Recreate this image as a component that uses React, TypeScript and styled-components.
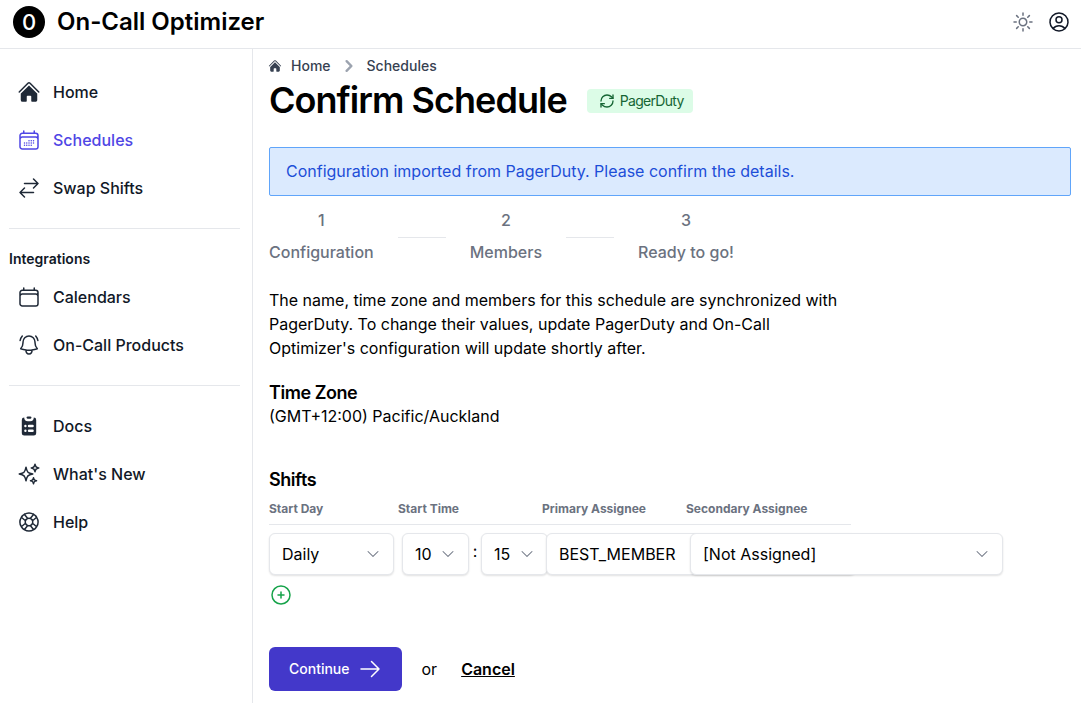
import styled, { createGlobalStyle } from "styled-components";
import { ReactNode } from "react";
import {
  HiHome,
  HiChevronDown,
  HiOutlineArrowsRightLeft,
  HiOutlineArrowRight,
  HiOutlineBellAlert,
  HiOutlineCalendar,
  HiOutlineCalendarDays,
  HiOutlineLifebuoy,
  HiOutlinePlusCircle,
  HiOutlineSparkles,
  HiOutlineSun,
  HiOutlineUserCircle,
} from "react-icons/hi2";
import { HiChevronRight, HiClipboardList } from "react-icons/hi";
import { RefreshCw } from "lucide-react";

const GlobalStyle = createGlobalStyle`
  * { box-sizing: border-box; }
  html, body { margin: 0; height: 100%; overflow: hidden; }
  body {
    background: #fff;
    color: #000;
    font-family: Inter, "Liberation Sans", sans-serif;
    font-size: 16px;
    line-height: 24px;
  }
`;

const Page = styled.div`
  display: flex;
  flex-direction: column;
  height: 100vh;
`;

const Header = styled.header`
  display: flex;
  align-items: center;
  flex: 0 0 49px;
  padding: 0 10px 4px 13px;
  border-bottom: 1px solid #e5e7eb;
`;

const Logo = styled.div`
  display: flex;
  align-items: center;
  justify-content: center;
  width: 32px;
  height: 32px;
  margin-right: 12px;
  border-radius: 50%;
  background: #000;
  color: #fff;
  font-size: 22px;
  font-weight: 500;
`;

const Brand = styled.div`
  flex: 1;
  font-size: 24px;
  font-weight: 600;
  line-height: 32px;
`;

const HeaderButton = styled.span<{ $color: string }>`
  display: flex;
  margin-left: 12px;
  color: ${(p) => p.$color};
  font-size: 24px;
`;

const Body = styled.div`
  display: flex;
  flex: 1;
  min-height: 0;
`;

const Sidebar = styled.nav`
  flex: 0 0 253px;
  padding: 19px 12px 0 9px;
  border-right: 1px solid #e5e7eb;
`;

const NavItem = styled.a<{ $active?: boolean }>`
  display: flex;
  align-items: center;
  gap: 12px;
  height: 48px;
  padding-left: 8px;
  color: ${(p) => (p.$active ? "#4f46e5" : "#111827")};
  font-size: 16px;
  font-weight: 500;
  svg {
    flex: none;
    font-size: 24px;
    color: ${(p) => (p.$active ? "#4f46e5" : "#1f2937")};
  }
`;

const NavDivider = styled.hr`
  margin: 16px 0;
  border: none;
  border-top: 1px solid #e5e7eb;
`;

const NavLabel = styled.div`
  margin-top: 20px;
  margin-bottom: 4px;
  color: #111827;
  font-size: 14px;
  font-weight: 600;
  line-height: 20px;
`;

const Main = styled.main`
  flex: 1;
  min-width: 0;
  padding: 7px 10px 0 16px;
`;

const Breadcrumb = styled.div`
  display: flex;
  align-items: center;
  height: 20px;
  color: #374151;
  font-size: 14px;
  font-weight: 500;
`;

const Crumb = styled.span`
  display: flex;
  align-items: center;
`;

const CrumbHome = styled.span`
  display: flex;
  margin-left: -1px;
  margin-right: 9px;
  color: #374151;
  font-size: 14px;
`;

const CrumbSep = styled.span`
  display: flex;
  margin: 0 6px;
  color: #9ca3af;
  font-size: 24px;
`;

const TitleRow = styled.div`
  display: flex;
  align-items: center;
  gap: 20px;
  margin-top: 4px;
  margin-bottom: 27px;
`;

const Title = styled.h1`
  margin: 0;
  font-size: 36px;
  font-weight: 600;
  line-height: 40px;
  letter-spacing: -0.96px;
`;

const Badge = styled.span`
  display: flex;
  align-items: center;
  gap: 5px;
  height: 24px;
  margin-top: 1px;
  padding: 0 9px 0 12px;
  border-radius: 4px;
  background: #dcfce7;
  color: #166534;
  font-size: 14px;
  letter-spacing: -0.7px;
`;

const Alert = styled.div`
  height: 49px;
  padding: 11px 16px;
  border: 1px solid #60a5fa;
  border-radius: 2px;
  background: #dbeafe;
  color: #1d4ed8;
  font-size: 16px;
`;

const Steps = styled.div`
  display: flex;
  align-items: center;
  gap: 24px;
  margin-top: 12px;
  margin-bottom: 24px;
  color: #6b7280;
  font-weight: 500;
`;

const Step = styled.div`
  display: flex;
  flex-direction: column;
  align-items: center;
  gap: 8px;
`;

const StepLine = styled.div`
  width: 48px;
  margin-top: 3px;
  border-top: 1px solid #e5e7eb;
`;

const Intro = styled.p`
  max-width: 576px;
  margin: 0 0 19px;
`;

const SectionTitle = styled.h2`
  margin: 0;
  font-size: 18px;
  font-weight: 600;
  line-height: 28px;
  letter-spacing: -0.45px;
`;

const Zone = styled.div`
  margin-top: -3px;
  margin-bottom: 38px;
`;

const ShiftHead = styled.div`
  display: grid;
  grid-template-columns: 129px 144px 144px 165px;
  width: 582px;
  margin-top: 6px;
  padding-bottom: 6px;
  border-bottom: 1px solid #e5e7eb;
  color: #6b7280;
  font-size: 12px;
  font-weight: 700;
  line-height: 18px;
`;

const ShiftRow = styled.div`
  display: grid;
  grid-template-columns: 129px 144px 144px 165px;
  margin-top: 8px;
`;

const TimeCell = styled.div`
  display: flex;
  align-items: flex-start;
  padding-left: 4px;
`;

const Colon = styled.span`
  flex: none;
  width: 12px;
  text-align: center;
  line-height: 36px;
`;

const AssigneeCell = styled.div`
  padding-left: 4px;
`;

const Select = styled.div<{ $width: number; $raised?: boolean }>`
  position: relative;
  z-index: ${(p) => (p.$raised ? 1 : 0)};
  display: flex;
  align-items: center;
  justify-content: space-between;
  flex: none;
  width: ${(p) => p.$width}px;
  height: 42px;
  padding: 0 12px;
  border: 1px solid #e5e7eb;
  border-radius: 6px;
  background: #fff;
  box-shadow: 0 1px 2px rgba(0, 0, 0, 0.12);
  svg {
    flex: none;
    color: #6b7280;
    font-size: 16px;
  }
`;

const AddButton = styled.span`
  display: flex;
  margin-top: 8px;
  color: #16a34a;
  font-size: 24px;
`;

const Actions = styled.div`
  display: flex;
  align-items: center;
  margin-top: 40px;
`;

const PrimaryButton = styled.button`
  display: flex;
  align-items: center;
  gap: 8px;
  height: 44px;
  padding: 0 20px;
  border: none;
  border-radius: 6px;
  background: #4338ca;
  color: #fff;
  font-family: inherit;
  font-size: 14px;
  font-weight: 500;
  line-height: 20px;
  svg {
    font-size: 24px;
  }
`;

const Or = styled.span`
  margin: 0 24px 0 20px;
`;

const CancelLink = styled.a`
  color: #000;
  font-weight: 600;
  text-decoration: underline;
`;

type LinkDef = { label: string; icon: ReactNode; active?: boolean };

const mainLinks: LinkDef[] = [
  { label: "Home", icon: <HiHome /> },
  { label: "Schedules", icon: <HiOutlineCalendarDays />, active: true },
  { label: "Swap Shifts", icon: <HiOutlineArrowsRightLeft /> },
];

const integrationLinks: LinkDef[] = [
  { label: "Calendars", icon: <HiOutlineCalendar /> },
  { label: "On-Call Products", icon: <HiOutlineBellAlert /> },
];

const helpLinks: LinkDef[] = [
  { label: "Docs", icon: <HiClipboardList /> },
  { label: "What's New", icon: <HiOutlineSparkles /> },
  { label: "Help", icon: <HiOutlineLifebuoy /> },
];

const NavLinks = ({ links }: { links: LinkDef[] }) => (
  <>
    {links.map((l) => (
      <NavItem key={l.label} $active={l.active}>
        {l.icon}
        {l.label}
      </NavItem>
    ))}
  </>
);

export default function App() {
  return (
    <Page>
      <GlobalStyle />
      <Header>
        <Logo>0</Logo>
        <Brand>On-Call Optimizer</Brand>
        <HeaderButton $color="#6b7280">
          <HiOutlineSun />
        </HeaderButton>
        <HeaderButton $color="#111827">
          <HiOutlineUserCircle />
        </HeaderButton>
      </Header>
      <Body>
        <Sidebar>
          <NavLinks links={mainLinks} />
          <NavDivider />
          <NavLabel>Integrations</NavLabel>
          <NavLinks links={integrationLinks} />
          <NavDivider />
          <NavLinks links={helpLinks} />
        </Sidebar>
        <Main>
          <Breadcrumb>
            <CrumbHome>
              <HiHome />
            </CrumbHome>
            <Crumb>Home</Crumb>
            <CrumbSep>
              <HiChevronRight />
            </CrumbSep>
            <Crumb>Schedules</Crumb>
          </Breadcrumb>
          <TitleRow>
            <Title>Confirm Schedule</Title>
            <Badge>
              <RefreshCw size={16} />
              PagerDuty
            </Badge>
          </TitleRow>
          <Alert>Configuration imported from PagerDuty. Please confirm the details.</Alert>
          <Steps>
            <Step>
              <span>1</span>
              <span>Configuration</span>
            </Step>
            <StepLine />
            <Step>
              <span>2</span>
              <span>Members</span>
            </Step>
            <StepLine />
            <Step>
              <span>3</span>
              <span>Ready to go!</span>
            </Step>
          </Steps>
          <Intro>
            The name, time zone and members for this schedule are synchronized with PagerDuty. To
            change their values, update PagerDuty and On-Call Optimizer's configuration will update
            shortly after.
          </Intro>
          <SectionTitle>Time Zone</SectionTitle>
          <Zone>(GMT+12:00) Pacific/Auckland</Zone>
          <SectionTitle>Shifts</SectionTitle>
          <ShiftHead>
            <span>Start Day</span>
            <span>Start Time</span>
            <span>Primary Assignee</span>
            <span>Secondary Assignee</span>
          </ShiftHead>
          <ShiftRow>
            <div>
              <Select $width={125}>
                Daily
                <HiChevronDown />
              </Select>
            </div>
            <TimeCell>
              <Select $width={67}>
                10
                <HiChevronDown />
              </Select>
              <Colon>:</Colon>
              <Select $width={67}>
                15
                <HiChevronDown />
              </Select>
            </TimeCell>
            <AssigneeCell>
              <Select $width={310}>BEST_MEMBER</Select>
            </AssigneeCell>
            <AssigneeCell>
              <Select $width={313} $raised>
                [Not Assigned]
                <HiChevronDown />
              </Select>
            </AssigneeCell>
          </ShiftRow>
          <AddButton>
            <HiOutlinePlusCircle />
          </AddButton>
          <Actions>
            <PrimaryButton>
              Continue
              <HiOutlineArrowRight />
            </PrimaryButton>
            <Or>or</Or>
            <CancelLink>Cancel</CancelLink>
          </Actions>
        </Main>
      </Body>
    </Page>
  );
}
